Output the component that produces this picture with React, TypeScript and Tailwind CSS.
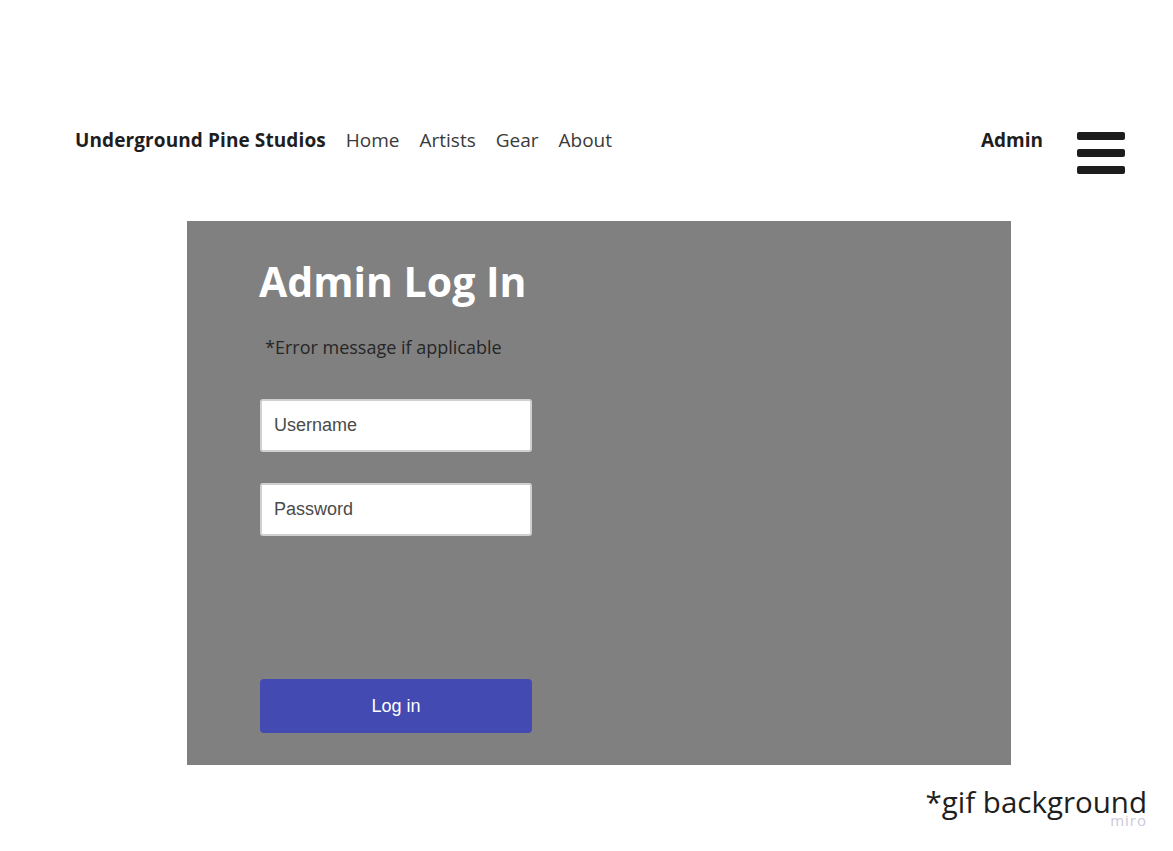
import React from 'react';

const navLinks = ['Home', 'Artists', 'Gear', 'About'];

const Header = () => (
  <header className="flex items-start pl-[75px] pr-[48px] pt-[127px]">
    <div className="flex items-center h-[26px]">
      <span className="text-[19px] font-bold text-[#1e1e1e] leading-[26px] tracking-[0.1px]">Underground Pine Studios</span>
      <nav className="flex items-center gap-[20px] ml-[20px]">
        {navLinks.map((l) => (
          <a key={l} href="#" className="text-[19px] font-normal text-[#3a3a3a] leading-[26px]">
            {l}
          </a>
        ))}
      </nav>
    </div>
    <span className="ml-auto text-[19px] font-bold text-[#1e1e1e] leading-[26px]">Admin</span>
    {/* hamburger */}
    <div className="ml-[34px] mt-[5px] flex flex-col gap-[9px] w-[48px]">
      <div className="h-[8px] rounded-[2px] bg-[#1c1c1c]" />
      <div className="h-[8px] rounded-[2px] bg-[#1c1c1c]" />
      <div className="h-[8px] rounded-[2px] bg-[#1c1c1c]" />
    </div>
  </header>
);

const fieldClass =
  'ml-[1px] w-[272px] h-[53px] bg-white border-2 border-[#d0d0d0] rounded-[3px] px-[12px] text-[18px] text-[#444] placeholder:text-[#4a4a4a] outline-none';

const LoginPanel = () => (
  <section className="ml-[187px] mt-[47px] w-[824px] h-[544px] bg-[#808080] pl-[72px] pt-[36px] flex flex-col">
    <h1 className="text-[41px] font-bold text-white leading-[48px]">Admin Log In</h1>
    <p className="mt-[30px] ml-[6px] text-[18px] text-[#262626] leading-[24px]">*Error message if applicable</p>
    <input
      type="text"
      placeholder="Username"
      className={`mt-[40px] ${fieldClass}`}
      style={{ fontFamily: '"Liberation Sans", Arial, sans-serif' }}
    />
    <input
      type="password"
      placeholder="Password"
      className={`mt-[31px] ${fieldClass}`}
      style={{ fontFamily: '"Liberation Sans", Arial, sans-serif' }}
    />
    <button
      className="mt-[143px] ml-[1px] w-[272px] h-[54px] bg-[#434ab1] rounded-[4px] text-white text-[18px]"
      style={{ fontFamily: '"Liberation Sans", Arial, sans-serif' }}
    >
      Log in
    </button>
  </section>
);

export default function App() {
  return (
    <div className="relative w-full h-[851px] bg-white overflow-hidden" style={{ fontFamily: '"Open Sans", "Noto Sans", sans-serif' }}>
      <Header />
      <LoginPanel />
      <div className="flex justify-end pr-[26px] mt-[19px]">
        <span className="text-[29.5px] text-[#1e1e1e] leading-[36px]">*gif background</span>
      </div>
      <span className="absolute right-[26px] top-[810px] text-[15px] tracking-[1px] text-[#c9c9d9] leading-[20px]">miro</span>
    </div>
  );
}
